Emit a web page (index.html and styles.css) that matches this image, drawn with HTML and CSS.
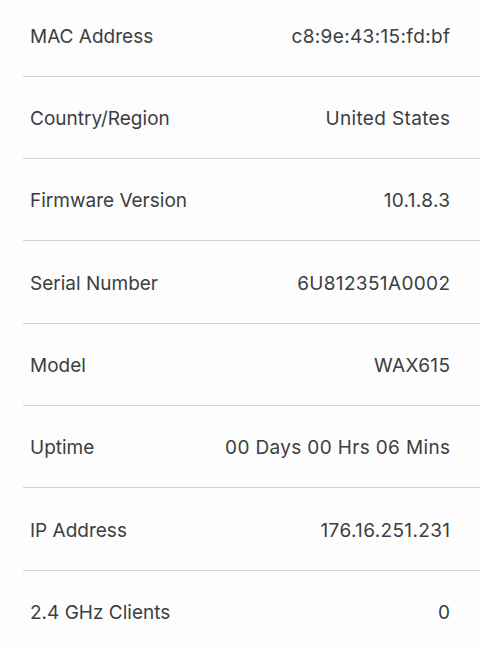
FILE: index.html
```html
<!DOCTYPE html>
<html>
<head>
<meta charset="utf-8">
<link rel="stylesheet" href="styles.css">
</head>
<body>
<div class="list">
  <div class="row"><span class="label">MAC Address</span><span class="value">c8:9e:43:15:fd:bf</span></div>
  <div class="row"><span class="label">Country/Region</span><span class="value">United States</span></div>
  <div class="row"><span class="label">Firmware Version</span><span class="value">10.1.8.3</span></div>
  <div class="row"><span class="label">Serial Number</span><span class="value">6U812351A0002</span></div>
  <div class="row"><span class="label">Model</span><span class="value">WAX615</span></div>
  <div class="row"><span class="label">Uptime</span><span class="value">00 Days 00 Hrs 06 Mins</span></div>
  <div class="row"><span class="label">IP Address</span><span class="value">176.16.251.231</span></div>
  <div class="row last"><span class="label">2.4 GHz Clients</span><span class="value">0</span></div>
</div>
</body>
</html>
```
FILE: styles.css
```css
html, body {
  margin: 0;
  padding: 0;
  background: #fdfdfd;
  overflow: hidden;
}
body {
  width: 480px;
  height: 650px;
  font-family: Inter, "Liberation Sans", Arial, sans-serif;
  color: #3b3e43;
}
.list {
  margin-top: -5.6px;
  padding-left: 23px;
}
.row {
  box-sizing: border-box;
  height: 82.33px;
  padding-top: 2px;
  display: flex;
  align-items: center;
  justify-content: space-between;
  border-bottom: 1px solid #d3d3d3;
  padding-left: 7px;
  padding-right: 30px;
  font-size: 19px;
}
.value {
  letter-spacing: 0.35px;
  margin-right: -0.35px;
}
.row.last {
  border-bottom: none;
}
```
